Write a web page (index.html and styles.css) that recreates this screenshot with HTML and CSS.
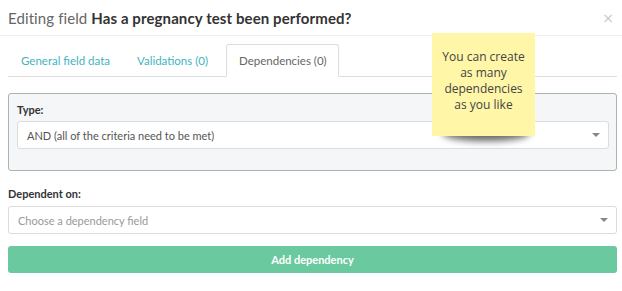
FILE: index.html
```html
<!DOCTYPE html>
<html>
<head>
<meta charset="utf-8">
<link rel="stylesheet" href="styles.css">
</head>
<body>
<div class="modal">
  <div class="modal-header">
    <h4 class="title">Editing field <strong>Has a pregnancy test been performed?</strong></h4>
    <span class="close">×</span>
  </div>
  <div class="modal-body">
    <ul class="tabs">
      <li class="tab">General field data</li>
      <li class="tab">Validations (0)</li>
      <li class="tab active">Dependencies (0)</li>
    </ul>
    <div class="panel">
      <label class="label">Type:</label>
      <div class="select"><span class="value">AND (all of the criteria need to be met)</span><span class="caret"></span></div>
    </div>
    <label class="label dep">Dependent on:</label>
    <div class="select"><span class="placeholder">Choose a dependency field</span><span class="caret"></span></div>
    <button class="btn">Add dependency</button>
  </div>
  <div class="note-shadow"></div>
  <div class="note">You can create as many dependencies as you like</div>
</div>
</body>
</html>
```
FILE: styles.css
```css
* { box-sizing: border-box; }
html, body { margin: 0; padding: 0; background: #fff; }
body { font-family: "Lato", "Noto Sans", sans-serif; color: #555; width: 622px; height: 291px; overflow: hidden; }
.modal { position: relative; }
.modal-header {
  display: flex; align-items: center; justify-content: space-between;
  height: 36px; padding: 0 8px 0 8px;
  border-bottom: 1px solid #eeeeee;
}
.title { margin: 0; font-size: 15px; font-weight: 400; color: #666; letter-spacing: 0.1px; }
.title strong { color: #333; font-weight: 700; }
.close { font-size: 14px; color: #c8c8c8; font-family: "DejaVu Sans", sans-serif; }
.modal-body { padding: 8px 5px 0 8px; }
.tabs {
  list-style: none; margin: 0; padding: 0; display: flex;
  border-bottom: 1px solid #dddddd; height: 33px;
}
.tab {
  font-size: 11.5px; color: #3fb3c2; padding: 0 12px; height: 33px;
  display: flex; align-items: center; border: 1px solid transparent; border-radius: 3px 3px 0 0;
}
.tab:nth-child(2) { padding-right: 13px; }
.tab.active {
  color: #666; background: #fff; border-color: #dddddd; border-bottom-color: #fff;
  margin-bottom: -1px; margin-left: 4px; padding: 0 11px 0 12px;
}
.tab:first-child { padding-left: 12px; padding-right: 13px; }
.panel {
  margin-top: 16px; background: #f5f6f8; border: 1px solid #a9b2b4; border-radius: 3px;
  padding: 9px 7px 21px 8px;
}
.label { display: block; font-size: 11px; font-weight: 700; color: #333; margin-bottom: 5px; }
.label.dep { margin-top: 16px; margin-bottom: 6px; }
.select {
  display: flex; align-items: center; justify-content: space-between;
  height: 28px; background: #fff; border: 1px solid #dcdcdc; border-radius: 3px;
  padding: 0 8px 0 9px; font-size: 11px;
}
.value { color: #555; }
.placeholder { color: #999; }
.caret { width: 0; height: 0; border-left: 4px solid transparent; border-right: 4px solid transparent; border-top: 4px solid #888; }
.btn {
  display: block; width: 100%; margin-top: 12px; height: 27px;
  background: #6bc9a0; border: 0; border-radius: 3px; color: #fff;
  font-family: inherit; font-size: 11px; font-weight: 700;
}
.note-shadow {
  position: absolute; left: 442px; top: 118px; width: 88px; height: 16px;
  border-radius: 50%; background: rgba(0,0,0,0.5);
  box-shadow: 0 7px 7px rgba(0,0,0,0.6);
}
.note {
  position: absolute; left: 432px; top: 33px; width: 103px; height: 103px;
  background: #fff6a8; color: #444; font-family: "Open Sans", sans-serif;
  font-size: 12px; line-height: 16px; text-align: center; padding: 16px 8px 0;
}
```
